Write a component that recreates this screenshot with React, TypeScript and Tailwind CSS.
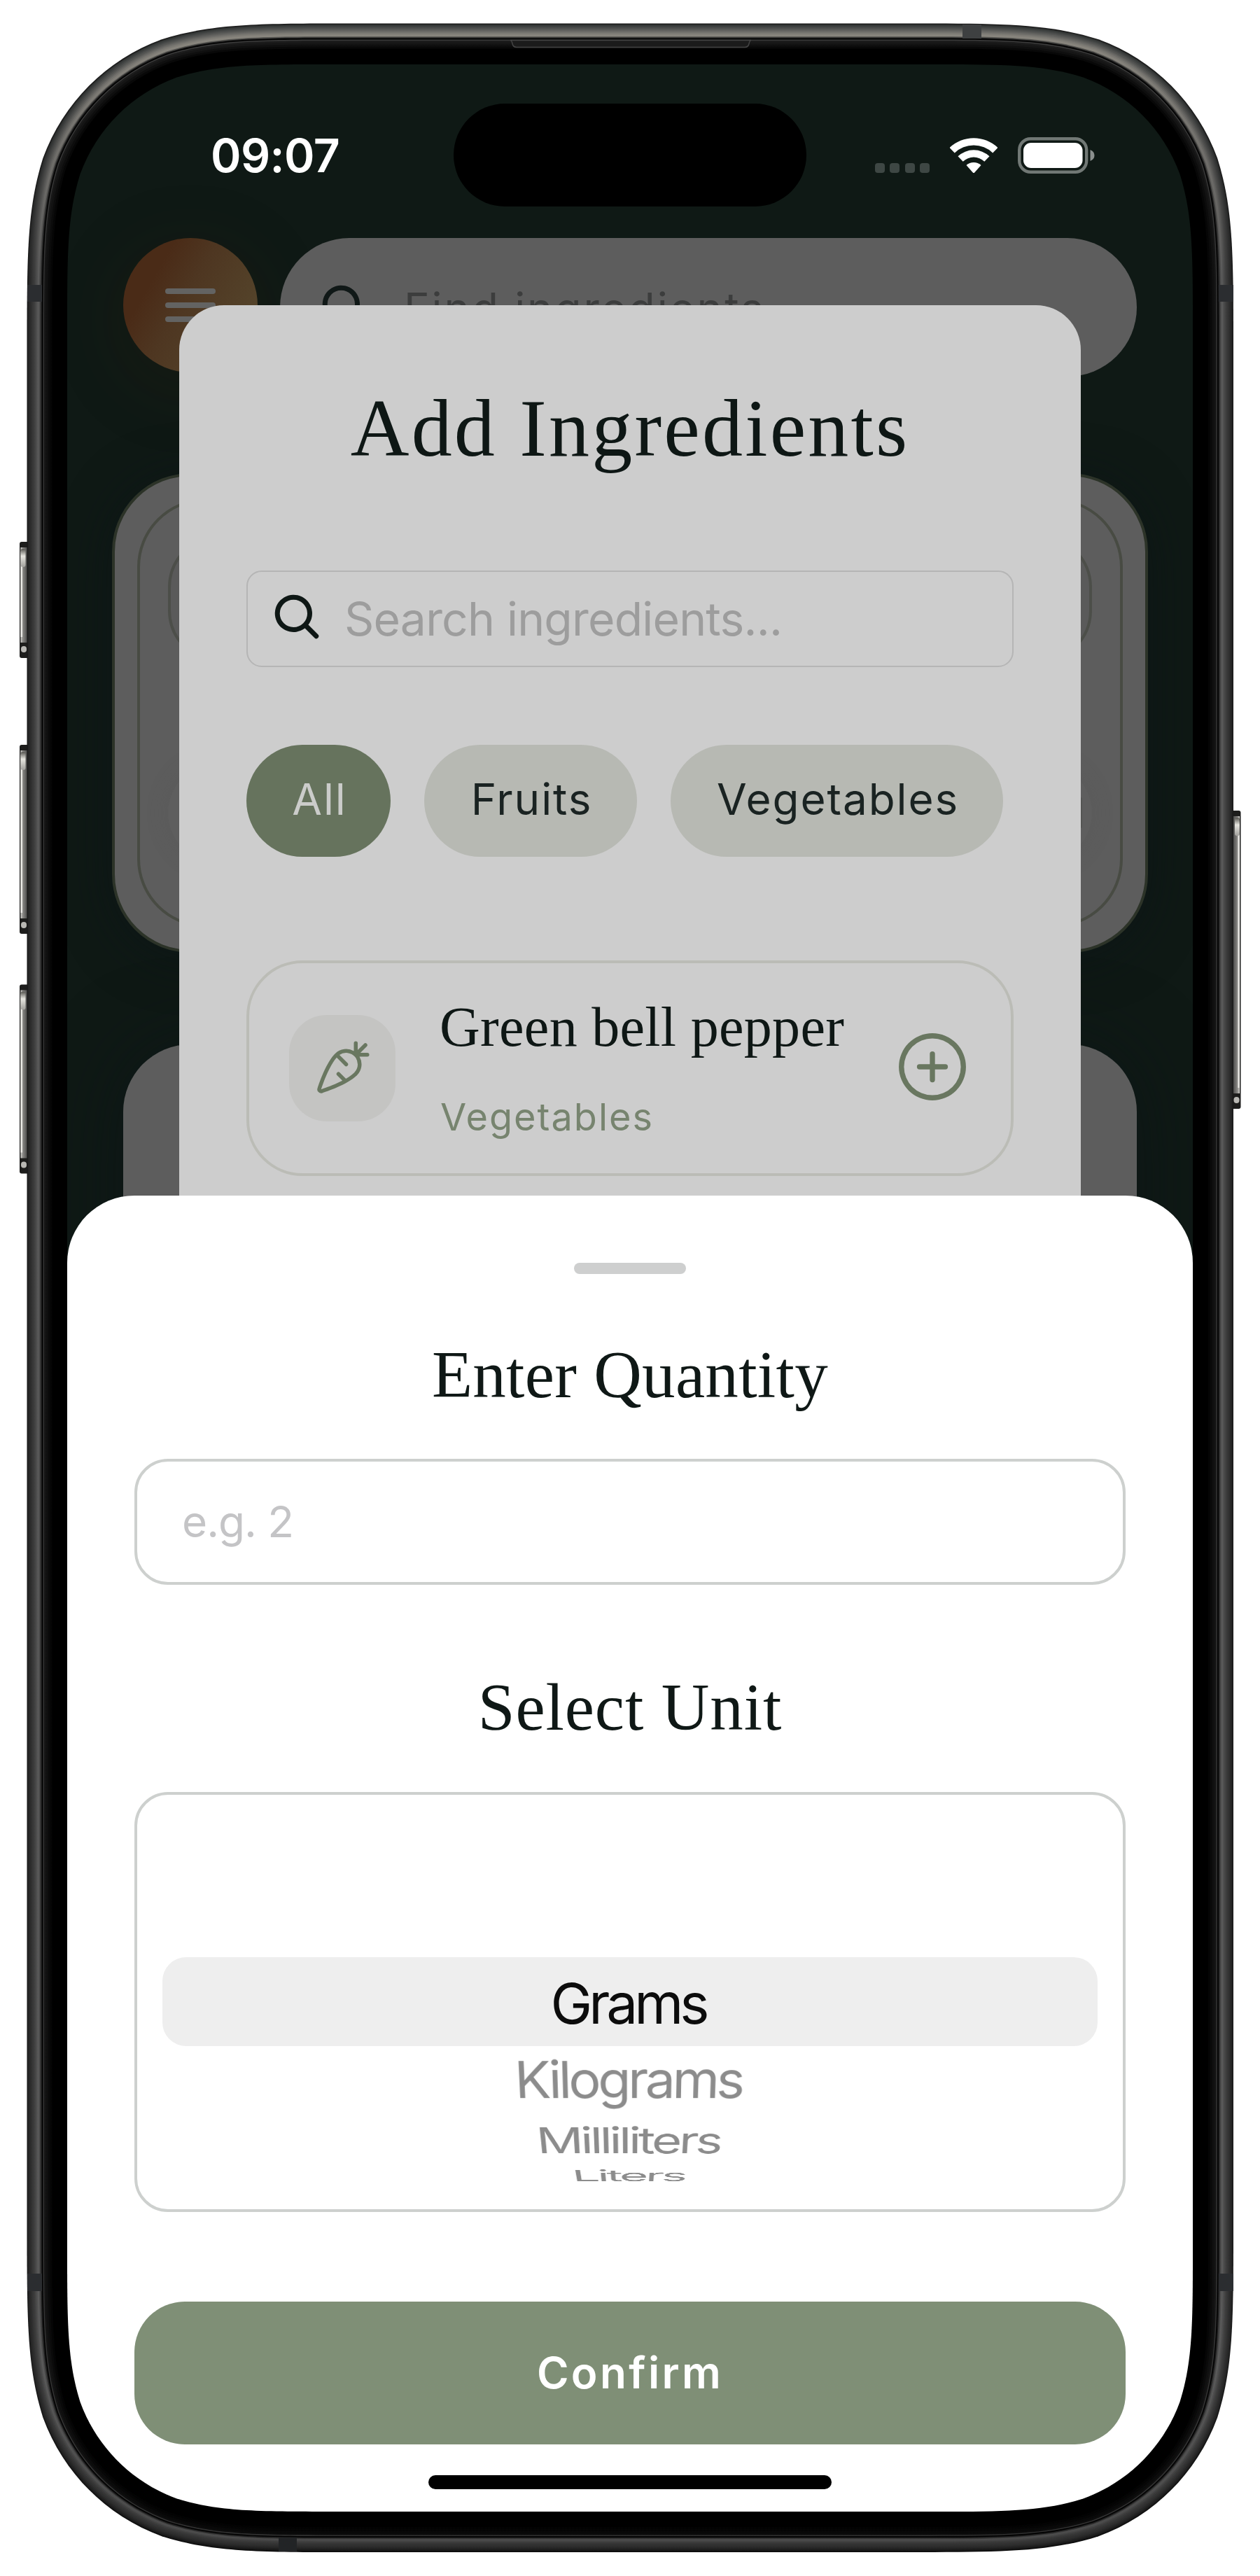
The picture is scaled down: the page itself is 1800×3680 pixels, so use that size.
import React from "react";
import { PiCarrot, PiMagnifyingGlassBold, PiPlusCircle } from "react-icons/pi";

/* Rounded rectangle with continuous (squircle) corners. */
function squircle(x: number, y: number, w: number, h: number, r: number): string {
  const a = 1.528665 * r;
  const b = 1.08849296 * r;
  const c = 0.86840694 * r;
  const d = 0.63149379 * r;
  const e = 0.07491139 * r;
  const f = 0.37282383 * r;
  const g = 0.16905956 * r;
  const R = x + w;
  const B = y + h;
  return [
    `M${x + a},${y}`,
    `L${R - a},${y}`,
    `C${R - b},${y} ${R - c},${y} ${R - d},${y + e}`,
    `C${R - f},${y + g} ${R - g},${y + f} ${R - e},${y + d}`,
    `C${R},${y + c} ${R},${y + b} ${R},${y + a}`,
    `L${R},${B - a}`,
    `C${R},${B - b} ${R},${B - c} ${R - e},${B - d}`,
    `C${R - g},${B - f} ${R - f},${B - g} ${R - d},${B - e}`,
    `C${R - c},${B} ${R - b},${B} ${R - a},${B}`,
    `L${x + a},${B}`,
    `C${x + b},${B} ${x + c},${B} ${x + d},${B - e}`,
    `C${x + f},${B - g} ${x + g},${B - f} ${x + e},${B - d}`,
    `C${x},${B - c} ${x},${B - b} ${x},${B - a}`,
    `L${x},${y + a}`,
    `C${x},${y + b} ${x},${y + c} ${x + e},${y + d}`,
    `C${x + g},${y + f} ${x + f},${y + g} ${x + d},${y + e}`,
    `C${x + c},${y} ${x + b},${y} ${x + a},${y}Z`,
  ].join("");
}

/* Offset from the outer edge, then the metal's colour on top, sides and bottom. */
const RINGS: [number, string, string, string][] = [
  [0, "#1c1c1c", "#1a1a1a", "#0d0d0d"],
  [1.5, "#303332", "#242424", "#161616"],
  [3, "#3c3f3e", "#292929", "#1e1e1e"],
  [5, "#484a49", "#2f2f2f", "#262626"],
  [7, "#545553", "#363636", "#2c2c2c"],
  [9, "#61615e", "#3c3c3c", "#303030"],
  [11, "#6e6d69", "#454545", "#343434"],
  [13, "#7b7973", "#4f4f4f", "#3a3a3a"],
  [15, "#85827b", "#5a5a5a", "#444444"],
  [17, "#8a877f", "#4e4e4e", "#4e4e4e"],
  [18.5, "#5c5b57", "#3a3a3a", "#3c3c3c"],
  [20, "#1e1e1e", "#1c1c1c", "#1a1a1a"],
  [21.5, "#000000", "#000000", "#000000"],
  [23, "#3c3c3c", "#343434", "#303030"],
  [24.5, "#1c1c1c", "#151515", "#0a0a0a"],
  [27, "#161616", "#101010", "#070707"],
  [30, "#0f0f0f", "#0a0a0a", "#040404"],
  [33, "#080808", "#050505", "#020202"],
  [36, "#000000", "#000000", "#000000"],
];

const SCREEN = squircle(96, 92, 1608, 3496, 248);

function SideButton({ x, y, h, flip }: { x: number; y: number; h: number; flip?: boolean }) {
  return (
    <g transform={flip ? `translate(${2 * x + 11} 0) scale(-1 1)` : undefined}>
      <rect x={x} y={y} width={14} height={h} rx={3} fill="#1d1d1c" />
      <rect x={x + 1.5} y={y + 8} width={9.5} height={h - 30} fill="url(#btn)" />
      <rect x={x + 1.5} y={y + 14} width={2.5} height={h - 44} fill="#e9e8e4" />
      <rect x={x + 1.5} y={y + 10} width={7} height={26} rx={3} fill="url(#flare)" />
      <rect x={x + 2} y={y + h - 17} width={8} height={9} rx={4} fill="#b9b8b4" />
    </g>
  );
}

function PhoneFrame() {
  return (
    <svg
      className="pointer-events-none absolute inset-0"
      width={1800}
      height={3680}
      viewBox="0 0 1800 3680"
      fill="none"
      aria-hidden
    >
      <defs>
        {RINGS.map(([o, t, s, b]) => (
          <linearGradient key={o} id={`ring${o * 10}`} gradientUnits="userSpaceOnUse" x1={0} y1={34} x2={0} y2={3646}>
            <stop offset={0.008} stopColor={t} />
            <stop offset={0.1} stopColor={s} />
            <stop offset={0.93} stopColor={s} />
            <stop offset={1} stopColor={b} />
          </linearGradient>
        ))}
        <linearGradient id="btn" x1={0} x2={1} y1={0} y2={0}>
          <stop offset={0} stopColor="#dddcd8" />
          <stop offset={0.3} stopColor="#8d8c89" />
          <stop offset={1} stopColor="#4a4a49" />
        </linearGradient>
        <linearGradient id="flare" x1={0} x2={0} y1={0} y2={1}>
          <stop offset={0} stopColor="#55544f" />
          <stop offset={0.4} stopColor="#e6e5df" />
          <stop offset={1} stopColor="#a09f9b" />
        </linearGradient>
        <mask id="bezel" maskUnits="userSpaceOnUse" x={0} y={0} width={1800} height={3680}>
          <rect width={1800} height={3680} fill="#fff" />
          <path d={SCREEN} fill="#000" />
        </mask>
      </defs>
      <SideButton x={28} y={774} h={166} />
      <SideButton x={28} y={1064} h={270} />
      <SideButton x={28} y={1406.5} h={270} />
      <SideButton x={1761.5} y={1158} h={426} flip />
      <g mask="url(#bezel)">
        {RINGS.map(([o]) => (
          <path
            key={o}
            d={squircle(38.5 + o, 33.5 + o, 1723.5 - 2 * o, 3612.5 - 2 * o, 305 - o)}
            fill={`url(#ring${o * 10})`}
          />
        ))}
        <rect x={39} y={407} width={21} height={24} fill="#2b2d30" />
        <rect x={1741} y={407} width={21} height={24} fill="#2b2d30" />
        <rect x={39} y={3248} width={21} height={25} fill="#2b2d30" />
        <rect x={1741} y={3248} width={21} height={25} fill="#2b2d30" />
        <rect x={1375} y={35} width={27} height={20} fill="#3e4041" />
        <rect x={398} y={3625} width={26} height={20} fill="#222426" />
        <path
          d="M729 57.5 h344 q-2 0 -3 5 q-1 5 -6 5 h-326 q-5 0 -6 -5 q-1 -5 -3 -5z"
          fill="#1b1b1b"
          stroke="#444444"
          strokeWidth={1.5}
        />
      </g>
    </svg>
  );
}

function StatusBar() {
  return (
    <div className="relative flex h-[248px] items-start justify-between pl-[205px] pr-[139px] text-white">
      <span className="mt-[90px] text-[66px] font-semibold leading-[80px] tracking-[-0.6px]">09:07</span>
      <div className="absolute left-[552px] top-[56px] h-[147px] w-[504px] rounded-full bg-black" />
      <div className="mt-[104px] flex h-[52px] items-start">
        <div className="mt-[37px] flex gap-[7.4px]">
          {[0, 1, 2, 3].map((i) => (
            <span key={i} className="size-[14px] rounded-[4px] bg-[#3e4744]" />
          ))}
        </div>
        <svg className="ml-[29px] mt-px" width={68} height={51} viewBox="0 0 68 51" fill="#fff">
          <path d="M-.4 14 A50 50 0 0 1 68.4 14 L61.2 21.4 A39.5 39.5 0 0 0 6.8 21.4Z" />
          <path d="M11.5 26.3 A32.8 32.8 0 0 1 56.5 26.3 L49.3 33.8 A22 22 0 0 0 18.7 33.8Z" />
          <path d="M23.5 39 A15.5 15.5 0 0 1 44.5 39 L35.2 49.4 Q34 50.6 32.8 49.4Z" />
        </svg>
        <svg className="ml-[29px]" width={111} height={52} viewBox="0 0 111 52">
          <rect x={2.2} y={2.2} width={96} height={47.6} rx={16} fill="none" stroke="#717875" strokeWidth={4.4} />
          <rect x={8} y={8} width={84.5} height={36} rx={11} fill="#fff" />
          <path d="M103.5 18 Q109.5 20.5 109.5 26 Q109.5 31.5 103.5 34Z" fill="#8b908e" />
        </svg>
      </div>
    </div>
  );
}

function HomePage() {
  return (
    <div className="flex h-full flex-col bg-[#0f1915]">
      <StatusBar />
      <div className="flex items-start gap-[32px] px-[80px]">
        <div className="flex size-[192px] flex-col items-center justify-center gap-[12px] rounded-full bg-[linear-gradient(120deg,#4a2b17_25%,#4e3621_45%,#54432a_80%)] shadow-[0_20px_110px_rgba(60,34,12,0.2)]">
          <span className="h-[8px] w-[72px] rounded-full bg-[#636362]" />
          <span className="h-[8px] w-[72px] rounded-full bg-[#636362]" />
          <span className="h-[8px] w-[72px] rounded-full bg-[#636362]" />
        </div>
        <div className="flex h-[198px] flex-1 items-center rounded-full bg-[#5d5d5d] pl-[55px]">
          <PiMagnifyingGlassBold size={74} color="#101817" />
          <span className="ml-[48px] mt-[4px] text-[62px] leading-[80px] tracking-[2.9px] text-[#3c3d3d]">Find ingredients...</span>
        </div>
      </div>
      <div className="mx-[64px] mt-[138px] h-[685px] rounded-[112px] border-4 border-[#2c3328] bg-[#5d5d5d] p-[32px] shadow-[0_8px_70px_rgba(12,20,24,0.6)]">
        <div className="flex h-full flex-col justify-between rounded-[98px] border-4 border-[#484b43] px-[40px] pb-[88px] pt-[48px]">
          <div className="h-[183px] rounded-[75px] border-4 border-[#4c4e49] bg-[#5a5a5a]" />
          <div className="flex h-[144px] items-center justify-between">
            <span className="size-[144px] rounded-full bg-[#5e5e5e] shadow-[0_0_30px_rgba(84,84,84,0.3)]" />
            <span className="flex size-[144px] items-center justify-end rounded-full bg-[#5e5e5e] pr-[14px] shadow-[0_0_30px_rgba(84,84,84,0.3)]">
              <span className="h-[44px] w-[4px] rounded bg-[#545553]" />
            </span>
          </div>
        </div>
      </div>
      <div className="mx-[80px] mt-[131px] h-[600px] rounded-[96px] bg-[#5d5d5d] shadow-[0_0_110px_rgba(12,20,24,0.6)]" />
    </div>
  );
}

function AddIngredients() {
  return (
    <div className="absolute left-[160px] top-[344px] flex h-[1500px] w-[1288px] flex-col rounded-[64px] bg-[#cdcdcd] px-[96px] pt-[116px]">
      <h1 className="text-center font-['Liberation_Serif',serif] text-[116px] leading-[120px] tracking-[3.2px] text-[#0e1715]">
        Add Ingredients
      </h1>
      <div className="mt-[143px] flex h-[138px] items-center rounded-[22px] border-2 border-[#b5b5b5] pl-[33px]">
        <PiMagnifyingGlassBold className="mb-[6px]" size={74} color="#0e1715" />
        <span className="ml-[31px] text-[66px] leading-[80px] tracking-[-0.8px] text-[#9d9d9d]">Search ingredients...</span>
      </div>
      <div className="mt-[111px] flex gap-[48px] text-[62px] leading-[80px] tracking-[1.9px] text-[#1a2322]">
        <span className="flex h-[160px] w-[206px] items-center justify-center rounded-full bg-[#66735d] pb-[4px] pl-[3px] text-[#cbccca]">All</span>
        <span className="flex h-[160px] w-[304px] items-center justify-center rounded-full bg-[#b7b9b3] pb-[4px] pl-[3px]">Fruits</span>
        <span className="flex h-[160px] w-[475px] items-center justify-center rounded-full bg-[#b7b9b3] pb-[4px] pl-[3px]">Vegetables</span>
      </div>
      <div className="mt-[148px] flex h-[308px] items-center rounded-[80px] border-4 border-[#bbbcb6] pl-[57px] pr-[53px]">
        <span className="flex size-[152px] items-center justify-center rounded-[54px] bg-[#c4c4c2]">
          <PiCarrot size={88} color="#697760" />
        </span>
        <div className="ml-[63px] flex-1">
          <div className="whitespace-nowrap font-['Liberation_Serif',serif] text-[80px] leading-[80px] tracking-[0.3px] text-[#0e1715]">
            Green bell pepper
          </div>
          <div className="mt-[59px] pl-px text-[54px] leading-[60px] tracking-[2px] text-[#77846f]">Vegetables</div>
        </div>
        <PiPlusCircle className="mb-[5px] shrink-0" size={118} color="#697760" />
      </div>
    </div>
  );
}

function QuantitySheet() {
  return (
    <div className="absolute inset-x-0 bottom-0 top-[1616px] flex flex-col items-center rounded-t-[96px] bg-white px-[96px]">
      <div className="mt-[96px] h-[16px] w-[160px] rounded-full bg-[#cecfcf]" />
      <h2 className="mt-[94px] font-['Liberation_Serif',serif] text-[95px] leading-[100px] tracking-[0.3px] text-[#0f1816]">
        Enter Quantity
      </h2>
      <div className="mt-[70px] flex h-[180px] w-full items-center rounded-[48px] border-4 border-[#cdd0ce] pl-[64px] text-[62px] leading-[80px] tracking-[-1px] text-[#c4c4c6]">
        e.g. 2
      </div>
      <h2 className="mt-[125px] font-['Liberation_Serif',serif] text-[95px] leading-[100px] tracking-[0.9px] text-[#0f1816]">
        Select Unit
      </h2>
      <div className="mt-[71px] flex h-[600px] w-full flex-col rounded-[48px] border-4 border-[#cdd0ce] px-[36px] pt-[232px] text-center text-[80px] tracking-[-4.6px] text-[#8c8c8c]">
        <div className="h-[127px] rounded-[34px] bg-[#eeeeee] pr-[5px] pt-[2px] leading-[127px] tracking-[-5px] text-[#0c0c0c]">Grams</div>
        <div className="h-[95px] pr-[5px] leading-[95px] [transform:perspective(1500px)_rotateX(-24deg)_scaleX(0.965)]">Kilograms</div>
        <div className="h-[79px] pr-[5px] leading-[79px] [transform:perspective(1500px)_rotateX(-50deg)_scaleX(0.93)]">Milliliters</div>
        <div className="h-[22px] pr-[5px] leading-[22px] [transform:perspective(1500px)_rotateX(-74deg)_scaleX(0.89)]">Liters</div>
      </div>
      <div className="mt-[128px] flex h-[204px] w-full items-center justify-center rounded-[72px] bg-[#7f8f76] text-[62px] font-semibold leading-[80px] tracking-[3.3px] text-white">
        Confirm
      </div>
      <div className="mt-[44px] h-[20px] w-[576px] rounded-full bg-black" />
    </div>
  );
}

export default function App() {
  return (
    <div className="relative h-[3680px] w-[1800px] overflow-hidden bg-white pl-[96px] pt-[92px] font-[Inter,'Liberation_Sans',sans-serif]">
      <div className="relative h-[3496px] w-[1608px] overflow-hidden rounded-[230px]">
        <HomePage />
        <AddIngredients />
        <QuantitySheet />
      </div>
      <PhoneFrame />
    </div>
  );
}
